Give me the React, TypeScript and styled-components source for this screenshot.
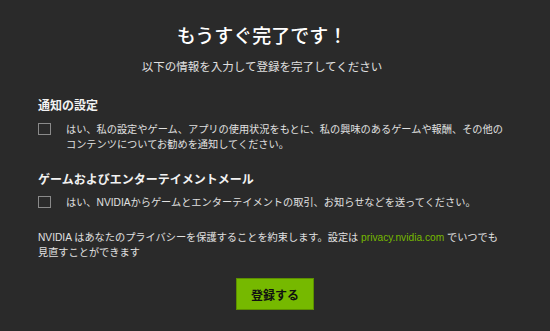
import React from "react";
import styled, { createGlobalStyle } from "styled-components";

const GlobalStyle = createGlobalStyle`
  html, body {
    margin: 0;
    padding: 0;
    background: #2a2a2a;
  }
  body {
    font-family: "Liberation Sans", "Noto Sans CJK JP", sans-serif;
  }
`;

const Page = styled.div`
  width: 550px;
  height: 331px;
  box-sizing: border-box;
  padding: 25px 38px 0 38px;
  background: #2a2a2a;
  color: #e6e6e6;
  display: flex;
  flex-direction: column;
`;

const Header = styled.div`
  padding-right: 26px;
  text-align: center;
`;

const Title = styled.h1`
  margin: 0;
  font-size: 19px;
  line-height: 24px;
  font-weight: 500;
  color: #ffffff;
`;

const Subtitle = styled.p`
  margin: 10px 0 0 0;
  font-size: 11.5px;
  line-height: 16px;
  color: #e0e0e0;
`;

const SectionTitle = styled.h2<{ $gap: number }>`
  margin: ${(p) => p.$gap}px 0 0 0;
  font-size: 12px;
  line-height: 16px;
  font-weight: 700;
  color: #f2f2f2;
`;

const OptionRow = styled.label<{ $gap: number }>`
  margin-top: ${(p) => p.$gap}px;
  display: flex;
  align-items: flex-start;
  gap: 15px;
  cursor: pointer;
`;

const Box = styled.span`
  flex: none;
  width: 13px;
  height: 12px;
  margin-top: 1px;
  box-sizing: border-box;
  border: 1px solid #8a8a8a;
`;

const OptionText = styled.span`
  font-size: 10.2px;
  line-height: 15px;
  color: #e0e0e0;
`;

const Notice = styled.p`
  margin: 20px 0 0 0;
  font-size: 10.2px;
  line-height: 15px;
  color: #e0e0e0;
`;

const Link = styled.a`
  color: #76b900;
  text-decoration: none;
`;

const Actions = styled.div`
  margin-top: 18px;
  display: flex;
  justify-content: center;
`;

const Submit = styled.button`
  width: 78px;
  height: 32px;
  box-sizing: border-box;
  border: 1px solid #5c8f00;
  background: #76b900;
  color: #111;
  font-family: "Liberation Sans", "Noto Sans CJK JP", sans-serif;
  font-size: 12px;
  font-weight: 700;
  cursor: pointer;
`;

export default function App() {
  return (
    <>
      <GlobalStyle />
      <Page>
        <Header>
          <Title>もうすぐ完了です！</Title>
          <Subtitle>以下の情報を入力して登録を完了してください</Subtitle>
        </Header>

        <SectionTitle $gap={23}>通知の設定</SectionTitle>
        <OptionRow $gap={8}>
          <Box />
          <OptionText>
            はい、私の設定やゲーム、アプリの使用状況をもとに、私の興味のあるゲームや報酬、その他の
            <br />
            コンテンツについてお勧めを通知してください。
          </OptionText>
        </OptionRow>

        <SectionTitle $gap={20}>ゲームおよびエンターテイメントメール</SectionTitle>
        <OptionRow $gap={7}>
          <Box />
          <OptionText>
            はい、NVIDIAからゲームとエンターテイメントの取引、お知らせなどを送ってください。
          </OptionText>
        </OptionRow>

        <Notice>
          NVIDIA はあなたのプライバシーを保護することを約束します。設定は{" "}
          <Link href="#">privacy.nvidia.com</Link> でいつでも
          <br />
          見直すことができます
        </Notice>

        <Actions>
          <Submit>登録する</Submit>
        </Actions>
      </Page>
    </>
  );
}
